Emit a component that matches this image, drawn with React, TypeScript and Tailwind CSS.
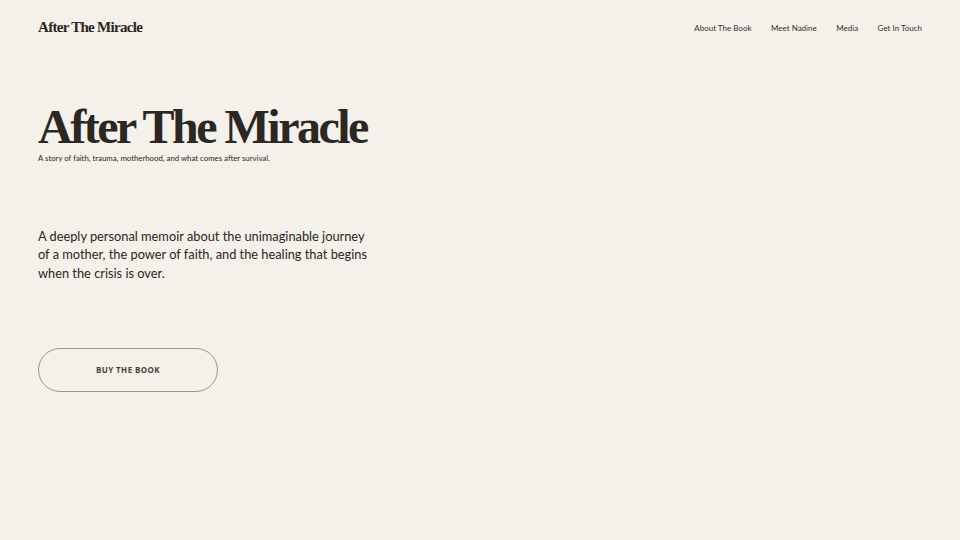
const navItems = ["About The Book", "Meet Nadine", "Media", "Get In Touch"];

export default function App() {
  return (
    <div className="min-h-[540px] w-full bg-[#f4f0ea] text-[#2b2723] font-['Lato',sans-serif]">
      {/* Header */}
      <header className="flex h-[55px] items-center justify-between px-[38px]">
        <span className="font-['Liberation_Serif',serif] text-[15px] font-bold tracking-[-0.7px] text-[#2b2723]">
          After The Miracle
        </span>
        <nav className="flex items-center gap-[19.5px] pt-[1px] text-[8px] text-[#34302c]">
          {navItems.map((item) => (
            <a key={item}>{item}</a>
          ))}
        </nav>
      </header>

      {/* Hero */}
      <main className="px-[38px] pt-[45px]">
        <h1 className="font-['Liberation_Serif',serif] text-[48px] font-bold leading-[54px] tracking-[-2.5px] text-[#2b2723]">
          After The Miracle
        </h1>
        <p className="-mt-[1px] text-[7.8px] text-[#2b2723]">
          A story of faith, trauma, motherhood, and what comes after survival.
        </p>

        <p className="mt-[62px] w-[332px] text-[12.8px] leading-[18.5px] text-[#2b2723]">
          A deeply personal memoir about the unimaginable journey of a mother, the power of faith, and the healing that begins
          when the crisis is over.
        </p>

        <button className="mt-[66px] flex h-[44px] w-[180px] items-center justify-center rounded-full border border-[#9d958e] font-['Open_Sans',sans-serif] text-[8px] font-bold tracking-[0.4px] text-[#4a403a]">
          BUY THE BOOK
        </button>
      </main>
    </div>
  );
}
